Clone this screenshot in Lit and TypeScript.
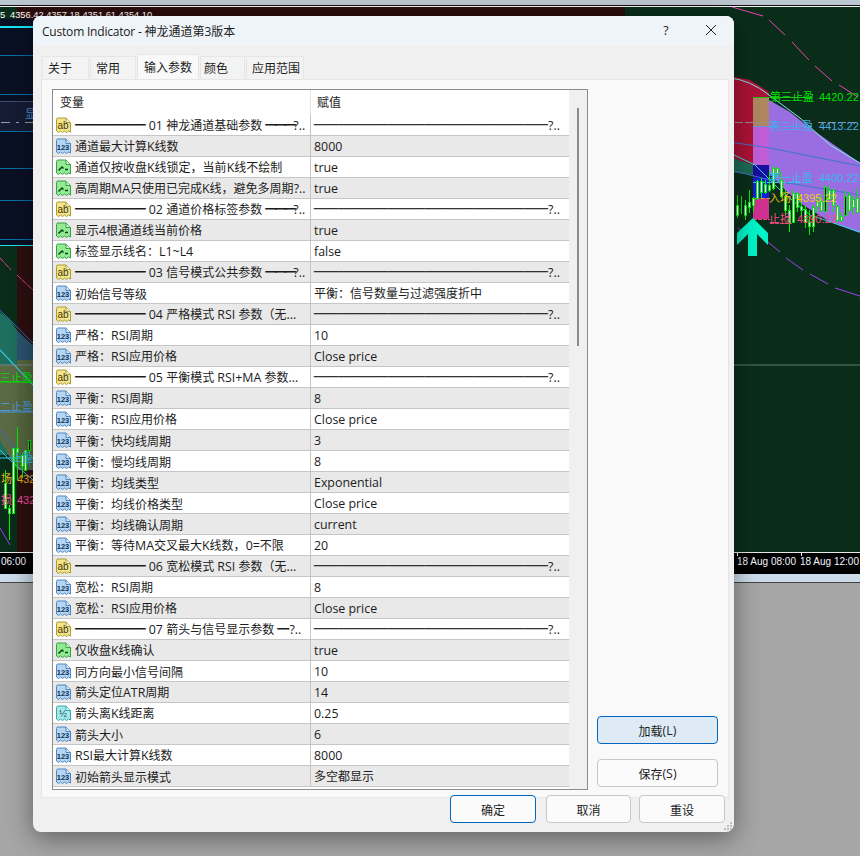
import { LitElement, html, css, svg } from "lit";
import { customElement } from "lit/decorators.js";

type Kind = "ab" | "num" | "bool" | "frac";
interface Row { k: Kind; n: string; v: string; }

const SEP = "───────────────────?..";
const sec = (n: string): Row => ({ k: "ab", n, v: SEP });
const num = (n: string, v: string): Row => ({ k: "num", n, v });
const bool = (n: string, v: string): Row => ({ k: "bool", n, v });

const ROWS: Row[] = [
  sec("━━━━━━ 01 神龙通道基础参数 ━━━?.."),
  num("通道最大计算K线数", "8000"),
  bool("通道仅按收盘K线锁定，当前K线不绘制", "true"),
  bool("高周期MA只使用已完成K线，避免多周期?..", "true"),
  sec("━━━━━━ 02 通道价格标签参数 ━━━?.."),
  bool("显示4根通道线当前价格", "true"),
  bool("标签显示线名：L1~L4", "false"),
  sec("━━━━━━ 03 信号模式公共参数 ━━━?.."),
  num("初始信号等级", "平衡：信号数量与过滤强度折中"),
  sec("━━━━━━ 04 严格模式 RSI 参数（无..."),
  num("严格：RSI周期", "10"),
  num("严格：RSI应用价格", "Close price"),
  sec("━━━━━━ 05 平衡模式 RSI+MA 参数..."),
  num("平衡：RSI周期", "8"),
  num("平衡：RSI应用价格", "Close price"),
  num("平衡：快均线周期", "3"),
  num("平衡：慢均线周期", "8"),
  num("平衡：均线类型", "Exponential"),
  num("平衡：均线价格类型", "Close price"),
  num("平衡：均线确认周期", "current"),
  num("平衡：等待MA交叉最大K线数，0=不限", "20"),
  sec("━━━━━━ 06 宽松模式 RSI 参数（无..."),
  num("宽松：RSI周期", "8"),
  num("宽松：RSI应用价格", "Close price"),
  sec("━━━━━━ 07 箭头与信号显示参数 ━?.."),
  bool("仅收盘K线确认", "true"),
  num("同方向最小信号间隔", "10"),
  num("箭头定位ATR周期", "14"),
  { k: "frac", n: "箭头离K线距离", v: "0.25" },
  num("箭头大小", "6"),
  num("RSI最大计算K线数", "8000"),
  num("初始箭头显示模式", "多空都显示"),
];

const ICON = {
  ab: { fill: "#f3e58c", edge: "#ad9a30", ink: "#3f380a", t: "ab" },
  num: { fill: "#b4d5f3", edge: "#4f86c0", ink: "#0e3058", t: "123" },
  bool: { fill: "#92ea92", edge: "#38a046", ink: "#0a4418", t: "" },
  frac: { fill: "#a4e8e8", edge: "#38a6aa", ink: "#0c454b", t: "½" },
};

function icon(k: Kind) {
  const c = ICON[k];
  const size = k === "ab" ? 10 : k === "num" ? 7.5 : 9;
  return html`<svg class="ico" width="17" height="17" viewBox="0 0 17 17">
    <path d="M1.5 2.5Q1.5 1 3 1H11L15.5 5.5V15L13.5 14 11.5 15.5 9.5 14 7.5 15.5 5.5 14 3.5 15.5 1.5 14Z" fill=${c.fill} stroke=${c.edge} />
    <path d="M11 1V5.5H15.5" fill="#fff" fill-opacity=".6" stroke=${c.edge} />
    ${k === "bool"
      ? svg`<path d="M3.5 11.5 7 8 8.5 9.5M10 10.5H13" fill="none" stroke=${c.ink} stroke-width="1.5" />`
      : svg`<text x="8" y="11.5" text-anchor="middle" font-size=${size} font-weight=${k === "num" ? 700 : 400} font-family="Liberation Sans, sans-serif" fill=${c.ink}>${c.t}</text>`}
  </svg>`;
}

/** Splits a label so wide script and Latin text get their own sizes, as the native list does. */
function txt(s: string) {
  return s
    .split(/([\u2500-\u257F\u2E80-\uFFEF]+)/)
    .filter(Boolean)
    .map((p) => {
      if (/^━{3}$/.test(p)) return html`<span class="w tail">${p}</span>`;
      if (/^━{6}$/.test(p)) return html`<span class="w lead">${p}</span>`;
      if (/^─+$/.test(p)) return html`<span class="w rule">${p}</span>`;
      return /[\u2500-\u257F\u2E80-\uFFEF]/.test(p) ? html`<span class="w">${p}</span>` : html`<span class="l">${p}</span>`;
    });
}

// [x, wickTop, wickBottom, bodyTop, bodyBottom, bullish]
const CANDLES: [number, number, number, number, number, number][] = [
  [737, 195, 218, 205, 215, 1], [741, 196, 214, 210, 210, 1], [745, 200, 220, 205, 215, 1], [749, 190, 213, 202, 207, 1],
  [753, 197, 212, 198, 205, 1], [757, 180, 200, 181, 198, 1], [761, 178, 198, 181, 192, 1], [765, 180, 194, 184, 192, 1],
  [769, 170, 192, 185, 190, 1], [773, 166, 190, 168, 188, 1], [777, 167, 178, 168, 174, 1], [781, 172, 198, 180, 196, 1],
  [785, 190, 215, 196, 210, 1], [789, 205, 232, 210, 222, 1], [793, 190, 223, 193, 222, 1], [797, 192, 212, 193, 207, 1],
  [801, 196, 216, 206, 210, 1], [805, 205, 228, 209, 222, 1], [809, 210, 235, 222, 226, 1], [813, 205, 232, 207, 226, 1],
  [817, 198, 212, 202, 206, 1], [821, 195, 212, 201, 210, 1], [825, 185, 212, 187, 211, 0], [829, 186, 200, 190, 199, 1],
  [833, 188, 212, 190, 205, 1], [837, 205, 222, 206, 220, 1], [841, 212, 222, 216, 220, 1], [845, 190, 216, 196, 215, 0],
  [849, 192, 212, 195, 210, 1], [853, 196, 215, 199, 207, 1], [857, 188, 212, 198, 212, 1],
];
const LEFT_CANDLES: [number, number, number, number, number, number][] = [
  [5, 470, 508, 483, 508, 1], [9, 505, 540, 508, 513, 1], [13, 448, 513, 448, 513, 1], [17, 427, 480, 448, 452, 1],
  [22, 453, 478, 455, 466, 1], [25, 450, 470, 450, 470, 1], [29, 440, 452, 440, 450, 0],
];

function candles(list: typeof CANDLES) {
  return list.map(([x, a, b, t, e, up]) => svg`
    <path d="M${x + 0.5} ${a}V${b}" stroke="#00f000" />
    <rect x=${x - 0.5} y=${t + 0.5} width="2" height=${e - t} fill=${up ? "#fff" : "#000"} stroke="#00e800" />`);
}

const H_LINES_LEFT = [55, 94, 131, 168, 200];

function chart() {
  return html`<svg class="bg" width="860" height="856" viewBox="0 0 860 856">
    <rect width="860" height="856" fill="#a6a6a6" />
    <rect width="860" height="5" fill="#bcc6d0" />
    <rect y="5" width="860" height="1" fill="#111" />
    <rect y="6" width="860" height="1" fill="#f4f4f4" />
    <rect y="7" width="860" height="546" fill="#0a2d1a" />
    <rect x="17" y="7" width="608" height="12" fill="#2c0d0d" />
    <text x="0" y="18" class="hd">5</text>
    <text x="10" y="18" class="hd">4356.42 4357.18 4351.61 4354.10</text>

    <!-- left strip -->
    <rect y="19" width="40" height="226" fill="#0a1024" />
    <rect y="26" width="40" height="2" fill="#19e6ee" />
    ${H_LINES_LEFT.map((y) => svg`<rect y=${y} width="40" height="1" fill="#0a6fa8" />`)}
    <rect y="102" width="40" height="29" fill="#161c33" />
    <rect y="101" width="40" height="1" fill="#3f4f70" />
    <rect y="122" x="1" width="9" height="1" fill="#9aa0a8" /><rect y="122" x="16" width="3" height="1" fill="#9aa0a8" /><rect y="122" x="25" width="8" height="1" fill="#9aa0a8" />
    <text x="25" y="118" class="lbl" fill="#4a90d8">显</text>
    <rect y="239" width="40" height="1" fill="#0a6fa8" />
    <rect y="245" width="40" height="1" fill="#19e6ee" />
    <rect x="17" y="246" width="23" height="306" fill="#2d0f10" />
    <polygon points="0,312 10,320 17,330 17,370 0,370" fill="#1f6f5f" />
    <polygon points="17,330 25,338 33,345 40,350 40,370 17,370" fill="#2c5470" />
    <polygon points="0,360 17,360 17,455 0,455" fill="#1f6f5f" />
    <polygon points="17,360 40,360 40,470 17,470" fill="#55683f" />
    <polygon points="0,365 17,365 17,470 0,440" fill="#5a6a45" />
    <path d="M0 258 11 270M17 275 33 290" stroke="#f040a0" fill="none" stroke-dasharray="6 1" />
    <path d="M0 310 40 350M0 430 33 470" stroke="#2f70c0" fill="none" />
    <path d="M0 350 33 385" stroke="#3cc8e8" fill="none" stroke-width="1.2" />
    <path d="M0 450 10 460 33 480" stroke="#3cc8e8" fill="none" />
    <path d="M0 365H40" stroke="#7b8290" />
    <path d="M0 382H33" stroke="#00e000" />
    <path d="M0 412H33" stroke="#4a9ae0" />
    <path d="M0 458H33" stroke="#30d0f0" />
    <path d="M0 528 10 545" stroke="#a040f0" fill="none" />
    ${candles(LEFT_CANDLES)}
    <text x="0" y="382" class="lbl" fill="#00e000">三止盈</text>
    <text x="0" y="411" class="lbl" fill="#4a9ae0">二止盈</text>
    <text x="11" y="462" class="lbl" fill="#30b8e8">止盈</text>
    <text x="1" y="483" class="lbl" fill="#e0b020">场</text><text x="17" y="483" class="lbl" fill="#e0b020">432</text>
    <text x="1" y="504" class="lbl" fill="#f050a0">损</text><text x="17" y="504" class="lbl" fill="#f050a0">432</text>

    <!-- right strip -->
    <polygon points="730,76 750,80 769,92 769,168 753,165 730,157" fill="#ac1236" />
    <polygon points="769,100 790,112 810,128 830,142 860,163 860,233 830,222 800,203 785,190 769,172" fill="#9a6de2" />
    <polygon points="730,157 753,165 753,175 730,172" fill="#1f6a55" />
    <rect x="753" y="97" width="16" height="29" fill="#ae8660" />
    <rect x="753" y="126" width="16" height="39" fill="#bf5ed6" />
    <rect x="753" y="165" width="16" height="13" fill="#1a0ea0" />
    <rect x="753" y="178" width="16" height="20" fill="#0f20d8" />
    <rect x="753" y="198" width="16" height="21" fill="#d03090" />
    <path d="M730 78Q750 80 769 95L800 118 830 145 860 163" stroke="#7fe6f0" fill="none" />
    <path d="M730 142 770 148 860 166" stroke="#3a78c8" fill="none" />
    <path d="M730 153 755 165 780 190 810 215 860 232" stroke="#30d8e8" fill="none" />
    <path d="M730 170 770 180 860 195" stroke="#3a78c8" fill="none" />
    <path d="M732 7 763 16M769 20 785 35M792 42 809 60M815 66 832 81M839 85 858 97" stroke="#f040b0" fill="none" />
    <path d="M738 228 746 234M768 242 780 252M786 258 803 270M810 274 828 284M835 288 860 296" stroke="#a040f0" fill="none" />
    <path d="M734 365H860" stroke="#5f7a70" />
    <path d="M753 97.5H812.5" stroke="#20c020" />
    <path d="M735 122.5H767M818 122.5H858" stroke="#909090" stroke-dasharray="8 2" />
    <path d="M753 126.5H812.5" stroke="#4aa8e8" stroke-dasharray="4 1" />
    <path d="M753 182.5H812" stroke="#30c8f0" stroke-dasharray="5 2" />
    <path d="M755 198.5H770" stroke="#d4a018" stroke-dasharray="4 2" />
    <path d="M753 219.5H770M770 223.5H792" stroke="#e04c70" stroke-dasharray="4 1" />
    ${candles(CANDLES)}
    <polygon points="753,218 768,233 768,245 757,234 757,256 748,256 748,234 737,245 737,233" fill="#00f4c8" />
    <text x="770" y="101" class="lbl" fill="#00e000">第三止盈</text><text x="819" y="101" class="lbl" fill="#00e000">4420.22</text>
    <text x="769" y="130" class="lbl" fill="#4aa8e8">第二止盈</text><text x="819" y="130" class="lbl" fill="#4aa8e8">4413.22</text>
    <text x="769" y="182" class="lbl" fill="#3ab8e8">第一止盈</text><text x="819" y="182" class="lbl" fill="#3ab8e8">4400.22</text>
    <text x="769" y="202" class="lbl" fill="#e8b818">入场</text><text x="797" y="202" class="lbl" fill="#f0c818">4395.22</text>
    <text x="769" y="223" class="lbl" fill="#f05080">止损</text><text x="797" y="223" class="lbl" fill="#f05080">4390.22</text>

    <!-- time axis -->
    <rect y="552" width="860" height="1" fill="#e8e8e8" />
    <rect y="553" width="860" height="21" fill="#000" />
    <rect y="574" width="860" height="8" fill="#ccdbea" />
    <rect y="582" width="860" height="1" fill="#444" />
    <rect x="737" y="553" width="1" height="3" fill="#fff" />
    <rect x="801" y="553" width="1" height="3" fill="#fff" />
    <text x="1" y="565" class="tm">06:00</text>
    <text x="737" y="565" class="tm">18 Aug 08:00</text>
    <text x="800" y="565" class="tm">18 Aug 12:00</text>
  </svg>`;
}

@customElement("app-root")
export class AppRoot extends LitElement {
  static styles = css`
    :host { display: block; position: relative; width: 860px; height: 856px; overflow: hidden;
      font-family: "Open Sans", "Noto Sans CJK SC", sans-serif; color: #1c1c1c; }
    .bg { position: absolute; inset: 0; display: block; }
    .bg text { font-family: "Liberation Sans", "Noto Sans CJK SC", sans-serif; }
    .bg .hd { font-size: 9.3px; fill: #fff; }
    .bg .lbl { font-size: 11px; }
    .bg .tm { font-size: 10px; fill: #f0f4ff; }
    .w { font-family: "Noto Sans CJK SC", sans-serif; font-size: 12px; }
    .l { font-family: "Open Sans", sans-serif; font-size: 12.4px; }
    .lead { letter-spacing: -.25px; }
    .tail { letter-spacing: -2.67px; }
    .rule { letter-spacing: .32px; -webkit-text-stroke: .6px #1c1c1c; }
    .dialog { position: absolute; left: 33px; top: 16px; width: 701px; height: 816px; box-sizing: border-box;
      display: flex; flex-direction: column; background: #f0f0f0; border-radius: 8px; overflow: hidden;
      box-shadow: 0 6px 26px rgba(0, 0, 0, .42); }
    .title { height: 30px; flex: none; box-sizing: border-box; background: #eff4f9; display: flex; align-items: center; padding: 0 0 3px 9px; }
    .title .name { flex: 1; }
    .title .name .l { font-size: 12px; letter-spacing: -.2px; }
    .title .q { width: 44px; text-align: center; font-size: 14px; }
    .title .x { width: 46px; display: flex; justify-content: center; }
    .tabs { flex: none; height: 33px; display: flex; align-items: flex-end; padding: 0 0 0 9px; gap: 1px; box-sizing: border-box; }
    .tab { height: 23px; box-sizing: border-box; display: flex; align-items: center; padding: 0 0 1px 5px;
      background: #f3f3f3; border: 1px solid #e6e6e6; border-bottom: none; }
    .tab.active { height: 25px; background: #f9f9f9; padding: 0 0 2px 6px; }
    .tab.tight { padding-left: 3px; }
    .pane { flex: none; height: 719px; margin: 0 5px 0 8px; box-sizing: border-box; background: #f9f9f9;
      border: 1px solid #e6e6e6; padding: 9px 10px 0 10px; display: flex; gap: 9px; }
    .list { width: 536px; height: 701px; flex: none; box-sizing: border-box; border: 1px solid #8c8c8c; background: #fff; display: flex; overflow: hidden; }
    .tbl { width: 516px; flex: none; }
    .row, .head { display: grid; grid-template-columns: 257px 1fr; }
    .head { height: 25px; }
    .hc { display: flex; align-items: center; padding: 0 0 2px 7px; }
    .hc + .hc { border-left: 1px solid #e2e2e2; padding-left: 6px; }
    .row { height: 21px; box-sizing: border-box; border-bottom: 1px solid #c6c6c6; }
    .row:nth-child(even) { background: #e9e9e9; }
    .cn { display: flex; align-items: center; overflow: hidden; white-space: nowrap; padding-left: 2px; gap: 3px; line-height: 20px; }
    .ico { flex: none; }
    .cv { border-left: 1px solid #c6c6c6; padding-left: 3px; overflow: hidden; white-space: nowrap; line-height: 19px; }
    .scroll { flex: 1; background: #f0f0f0; display: flex; justify-content: flex-end; padding: 18px 8px 0 0; }
    .thumb { width: 2px; height: 238px; background: #8a8a8a; }
    .side { flex: 1; display: flex; flex-direction: column; justify-content: flex-end; align-items: center; gap: 15px; padding: 0 0 10px 0; }
    .btn { box-sizing: border-box; display: flex; align-items: center; justify-content: center; height: 28px;
      background: #fbfbfb; border: 1px solid #c8c8c8; border-radius: 4px; }
    .side .btn { width: 121px; }
    .btn.load { background: #deebf7; border-color: #0067c0; }
    .btn.def { border-color: #0067c0; margin-right: 2px; }
    .foot { display: flex; justify-content: flex-end; gap: 8px; margin-top: -3px; padding-right: 9px; position: relative; }
    .foot .btn { width: 86px; }
    .foot .btn.mid { width: 85px; }
    .grip { position: absolute; right: 1px; bottom: 1px; }
  `;

  render() {
    return html`
      ${chart()}
      <div class="dialog">
        <div class="title">
          <div class="name">${txt("Custom Indicator - 神龙通道第3版本")}</div>
          <div class="q"><span class="l">?</span></div>
          <div class="x"><svg width="12" height="12" viewBox="0 0 12 12"><path d="M1 1 11 11M11 1 1 11" stroke="#222" stroke-width="1" fill="none" /></svg></div>
        </div>
        <div class="tabs">
          <div class="tab" style="width:47px">${txt("关于")}</div>
          <div class="tab" style="width:46px">${txt("常用")}</div>
          <div class="tab active" style="width:62px">${txt("输入参数")}</div>
          <div class="tab tight" style="width:45px">${txt("颜色")}</div>
          <div class="tab" style="width:58px">${txt("应用范围")}</div>
        </div>
        <div class="pane">
          <div class="list">
            <div>
              <div class="head"><div class="hc">${txt("变量")}</div><div class="hc">${txt("赋值")}</div></div>
              <div class="tbl">
                ${ROWS.map((r) => html`<div class="row">
                  <div class="cn">${icon(r.k)}<div>${txt(r.n)}</div></div>
                  <div class="cv">${txt(r.v)}</div>
                </div>`)}
              </div>
            </div>
            <div class="scroll"><div class="thumb"></div></div>
          </div>
          <div class="side">
            <div class="btn load">${txt("加载(L)")}</div>
            <div class="btn">${txt("保存(S)")}</div>
          </div>
        </div>
        <div class="foot">
          <div class="btn def">${txt("确定")}</div>
          <div class="btn mid">${txt("取消")}</div>
          <div class="btn">${txt("重设")}</div>
        </div>
        <svg class="grip" width="9" height="9" viewBox="0 0 9 9" fill="#bdbdbd">
          <rect x="6" y="0" width="2" height="2" /><rect x="3" y="3" width="2" height="2" /><rect x="6" y="3" width="2" height="2" />
          <rect x="0" y="6" width="2" height="2" /><rect x="3" y="6" width="2" height="2" /><rect x="6" y="6" width="2" height="2" />
        </svg>
      </div>
    `;
  }
}
